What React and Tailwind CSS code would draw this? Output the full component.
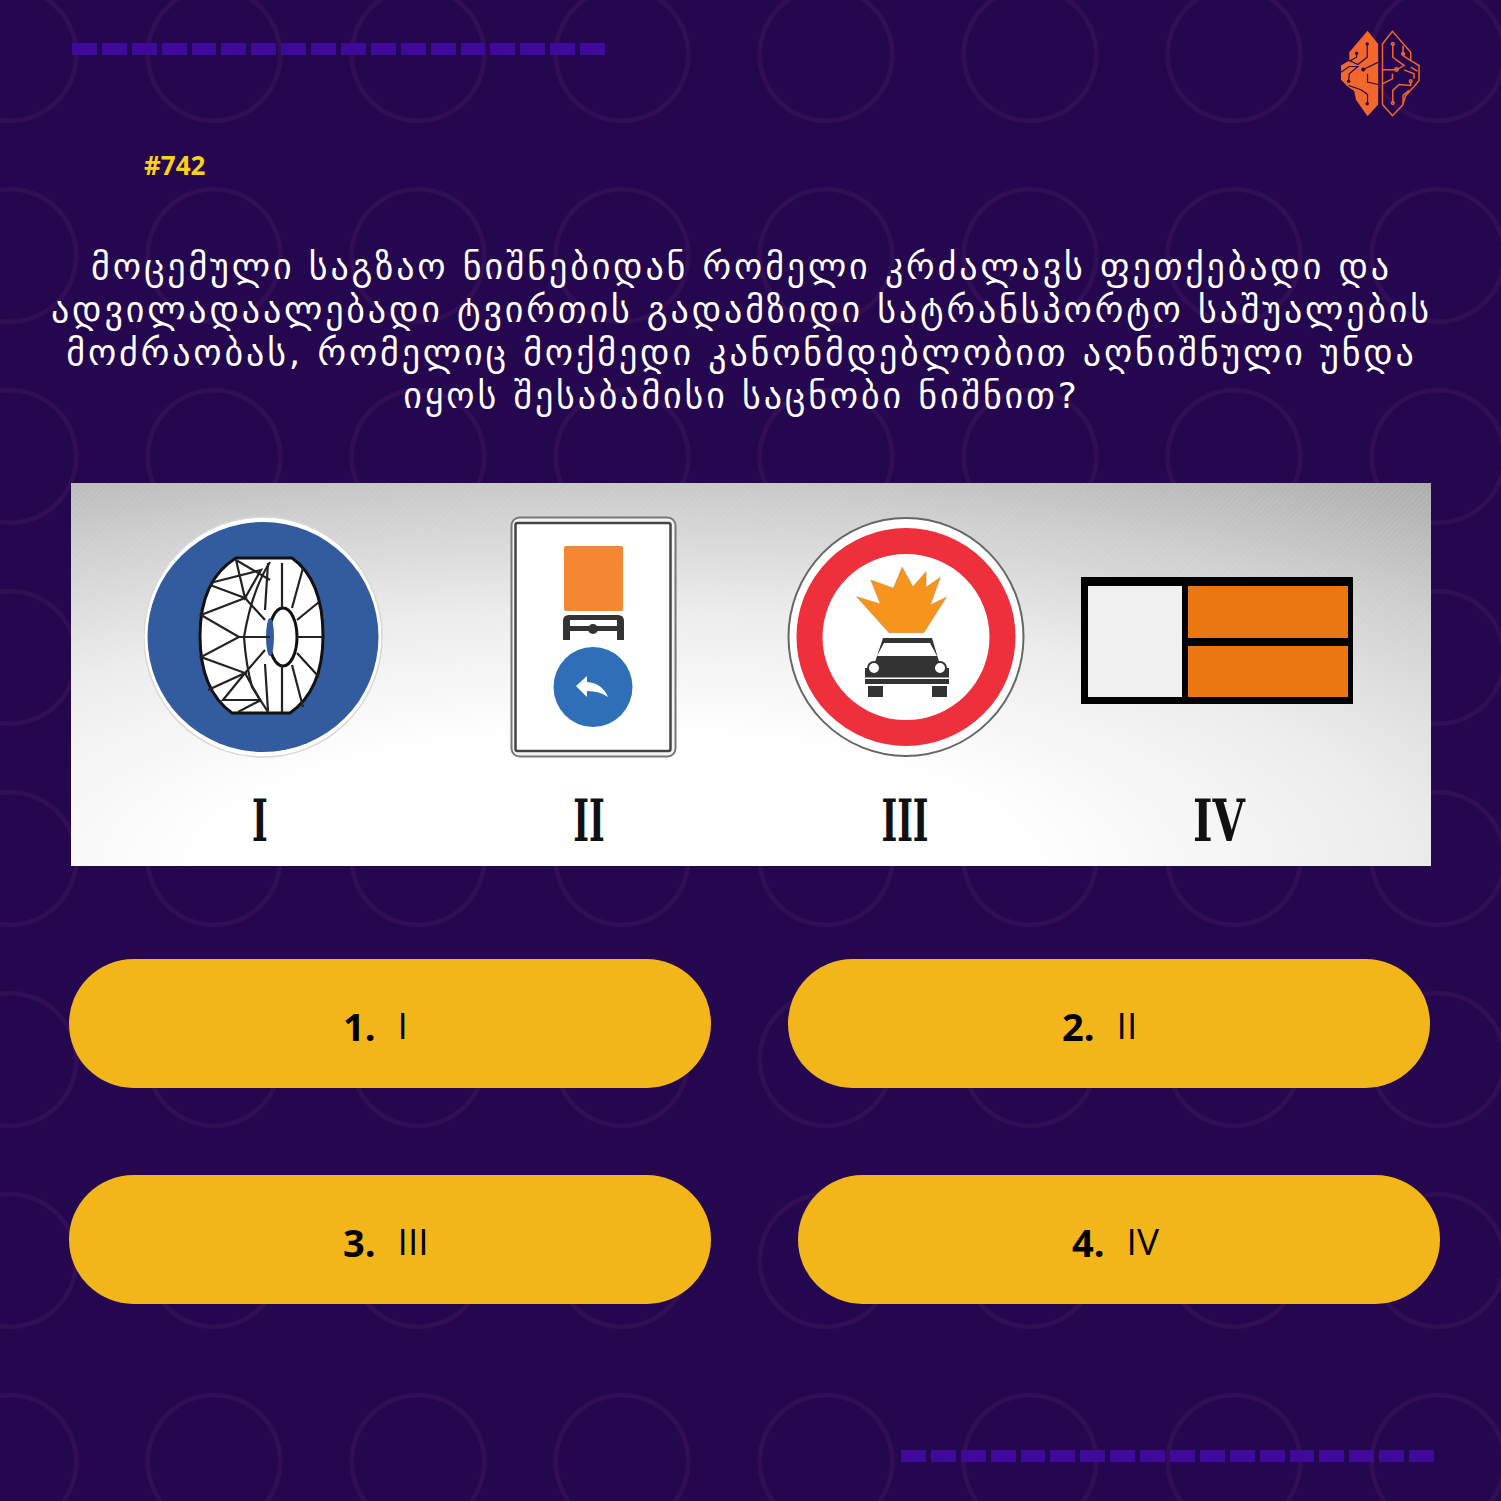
const dashes = Array.from({ length: 18 }, (_, i) => i);

const answers = [
  { id: 1, label: 'I', cls: 'ml-0' },
  { id: 2, label: 'II', cls: 'ml-[77px]' },
  { id: 3, label: 'III', cls: 'ml-0' },
  { id: 4, label: 'IV', cls: 'ml-[87px]' },
];

const DashRow = () => (
  <div className="flex gap-[5px]">
    {dashes.map((d) => (
      <div key={d} className="h-[12px] w-[24.9px] bg-[#3f0a9c]" />
    ))}
  </div>
);

const BrainLogo = () => (
  <svg viewBox="120 55 245 268" className="h-[89px] w-[82px]">
    <path d="M205 60 237 100V282L205 318 170 268 165 242 145 228 125 208V165L150 150V125Z" fill="#f2672a" />
    <g fill="none" stroke="#25074f" strokeWidth="3.5">
      <path d="M204 100V140L176 162 150 150" />
      <path d="M172 128 172 140 150 152" />
      <path d="M237 155 192 177" />
      <path d="M125 185 150 168 176 168 150 190 148 212" />
      <path d="M205 190V215L237 222" />
      <path d="M148 225 185 238 205 252V280" />
    </g>
    <g fill="#25074f">
      <circle cx="204" cy="100" r="5" />
      <circle cx="172" cy="128" r="5" />
      <circle cx="192" cy="177" r="6" />
      <circle cx="148" cy="212" r="5" />
      <circle cx="204" cy="280" r="5" />
    </g>
    <g fill="none" stroke="#f2672a" strokeWidth="4.5">
      <path d="M280 62 250 100V282L280 316 310 285 320 255 345 228 360 210V165L335 150V125Z" />
      <path d="M281 100V140L315 165 292 178H250" />
      <path d="M312 105V135L335 150" />
      <path d="M315 178 345 190V205" />
      <path d="M335 170 355 182" />
      <path d="M250 220 280 205V190" />
      <path d="M335 213V225L300 222 281 240V278" />
      <path d="M312 280V255L330 240" />
      <circle cx="281" cy="100" r="4" />
      <circle cx="312" cy="130" r="4" />
      <circle cx="292" cy="177" r="5" />
      <circle cx="335" cy="212" r="4" />
      <circle cx="281" cy="278" r="4" />
    </g>
  </svg>
);

const TireSign = () => (
  <svg viewBox="144 516 240 242" className="h-[242px] w-[240px]">
    <ellipse cx="263" cy="637" rx="119" ry="120" fill="#fff" stroke="#d8d8d8" strokeWidth="1.5" />
    <ellipse cx="263" cy="637" rx="115.5" ry="115" fill="#335c9f" />
    <path d="M236 558H292Q323 580 323 636 323 690 290 713H232Q200 690 200 636 200 580 236 558Z" fill="#fff" stroke="#111" strokeWidth="3" />
    <ellipse cx="283" cy="637" rx="14" ry="29" fill="#fff" stroke="#111" strokeWidth="3" />
    <ellipse cx="270" cy="637" rx="4" ry="19" fill="#335c9f" />
    <g fill="none" stroke="#222" strokeWidth="2.2">
      <path d="M270 562Q252 590 244 637 246 665 252 687L268 712" />
      <path d="M282 563V608M303 568 292 608M319 602 297 620M323 637H297M319 677 297 653M303 707 292 665M282 712V665" />
      <path d="M268 563 265 610M268 711 265 664" />
      <path d="M210 585 245 598 201 615 239 637 201 657 245 673 208 690" />
      <path d="M245 598 265 620M245 673 265 650M239 637H270" />
      <path d="M236 560 245 598 261 570 210 583M236 560 270 580" />
      <path d="M245 673 223 700H261L238 712M245 673 261 702" />
    </g>
  </svg>
);

const TruckRouteSign = () => (
  <svg viewBox="510 515 167 243" className="h-[243px] w-[167px]">
    <rect x="511.5" y="516.5" width="164" height="239" rx="8" fill="#f4f4f4" stroke="#777" strokeWidth="2" />
    <rect x="515.5" y="522" width="155" height="228" rx="2" fill="#fff" stroke="#444" strokeWidth="2.5" />
    <rect x="564" y="545" width="59" height="65" rx="2" fill="#f58634" />
    <path d="M563 639V620Q563 614 569 614H618Q624 614 624 620V639H617V630H570V639ZM570 625H617V619H570Z" fill="#333" fillRule="evenodd" />
    <circle cx="593" cy="628" r="5" fill="#333" />
    <ellipse cx="593" cy="686" rx="39.5" ry="40" fill="#2f6fb7" />
    <path d="M576 685 587 675V681Q602 682 608 696 600 690 587 690V696Z" fill="#fff" />
  </svg>
);

const FireSign = () => (
  <svg viewBox="788 516 239 242" className="h-[242px] w-[239px]">
    <ellipse cx="907" cy="637" rx="117.5" ry="119" fill="#fff" stroke="#666" strokeWidth="2" />
    <ellipse cx="907" cy="637" rx="96.5" ry="96" fill="#fff" stroke="#ee2f3c" strokeWidth="26" />
    <path d="M890 632.7 857.6 596.7 881.4 604 871.9 580 894.4 588.3 903.1 567.3 913.9 586.7 927 571.7 927 587.3 941.3 577.3 931.3 605 947.3 597.3 924.8 632.7Z" fill="#f7941e" stroke="#c98a45" strokeWidth="0.6" />
    <path d="M884 638H933L942 668H950V684H866V668H874Z" fill="#333" />
    <path d="M885 643H931L938 656H878Z" fill="#fff" />
    <circle cx="875" cy="668" r="6" fill="#fff" stroke="#333" strokeWidth="2" />
    <circle cx="941" cy="668" r="6" fill="#fff" stroke="#333" strokeWidth="2" />
    <rect x="866" y="677.5" width="84" height="1.5" fill="#fff" />
    <rect x="869" y="686" width="15" height="11" fill="#333" />
    <rect x="933" y="686" width="15" height="11" fill="#333" />
  </svg>
);

const HazardPlate = () => (
  <div className="ml-[55px] mt-[61px] grid h-[127px] w-[272px] grid-cols-[94px_1fr] grid-rows-2 gap-x-[6px] gap-y-[8px] bg-black pb-[7px] pl-[7px] pr-[5px] pt-[9px]">
    <div className="row-span-2 bg-[#f1f1f1]" />
    <div className="bg-[#ea7711]" />
    <div className="bg-[#ea7711]" />
  </div>
);

const Numeral = ({ children, cls = 'scale-x-[0.58]' }) => (
  <div className={`flex justify-center font-['DejaVu_Serif'] text-[58px] font-bold leading-[50px] text-[#111] ${cls}`}>
    {children}
  </div>
);

export default function App() {
  return (
    <div className="h-[1501px] w-[1501px] overflow-hidden bg-[#25074f] bg-[radial-gradient(circle,transparent_63.5px,#320f55_64.5px,#320f55_68px,transparent_69px)] bg-[size:204px_201px] bg-[position:-92px_-46px] font-['Open_Sans',sans-serif]">
      <header className="flex items-start justify-between pl-[72px] pr-[80px] pt-[29px]">
        <div className="pt-[14px]">
          <DashRow />
        </div>
        <BrainLogo />
      </header>

      <p className="ml-[144px] mt-[27px] text-[26px] font-bold leading-[40px] text-[#fcd116]">#742</p>

      <h1 className="mt-[60px] pr-[18px] text-center font-['DejaVu_Sans',sans-serif] text-[36px] leading-[43px] tracking-[2.85px] text-white">
        მოცემული საგზაო ნიშნებიდან რომელი კრძალავს ფეთქებადი და
        <br />
        ადვილადაალებადი ტვირთის გადამზიდი სატრანსპორტო საშუალების
        <br />
        მოძრაობას, რომელიც მოქმედი კანონმდებლობით აღნიშნული უნდა
        <br />
        იყოს შესაბამისი საცნობი ნიშნით?
      </h1>

      <section className="ml-[71px] mt-[66px] h-[383px] w-[1360px] bg-white bg-[repeating-linear-gradient(135deg,rgba(255,255,255,0.06)_0px,rgba(255,255,255,0.06)_2px,transparent_2px,transparent_4px),radial-gradient(ellipse_100%_115%_at_40%_100%,#ffffff_30%,#ececec_58%,#cfcfcf_82%,#a8a8a8_108%)]">
        <div className="flex items-start pl-[73px] pt-[33px]">
          <TireSign />
          <div className="ml-[126px]">
            <TruckRouteSign />
          </div>
          <div className="ml-[110px]">
            <FireSign />
          </div>
          <HazardPlate />
        </div>
        <div className="mt-[37px] grid grid-cols-[378px_280px_352px_276px]">
          <Numeral>I</Numeral>
          <Numeral>II</Numeral>
          <Numeral>III</Numeral>
          <Numeral cls="scale-x-[0.72]">IV</Numeral>
        </div>
      </section>

      <div className="ml-[69px] mt-[93px] grid grid-cols-[auto_auto] justify-start gap-y-[87px]">
        {answers.map((a) => (
          <button
            key={a.id}
            className={`flex h-[129px] w-[642px] items-center rounded-full bg-[#f3b61a] pl-[274px] pt-[5px] text-[38px] text-black ${a.cls}`}
          >
            <span className="font-bold">{a.id}.</span>
            <span className="ml-[22px] -translate-y-[1px] text-[37px] font-normal">{a.label}</span>
          </button>
        ))}
      </div>

      <div className="ml-[901px] mt-[146px]">
        <DashRow />
      </div>
    </div>
  );
}
